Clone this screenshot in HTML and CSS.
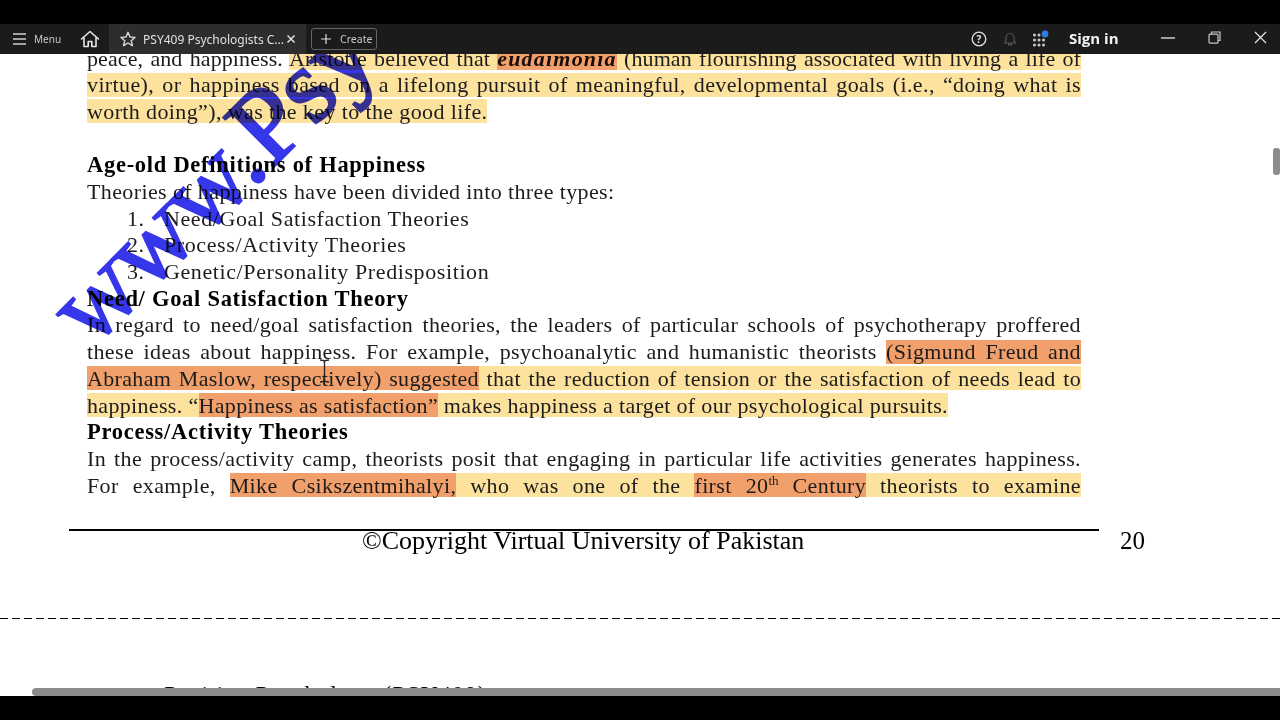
FILE: index.html
```html
<!DOCTYPE html>
<html lang="en">
<head>
<meta charset="utf-8">
<title>PSY409 Psychologists</title>
<link rel="stylesheet" href="styles.css">
</head>
<body>
<div class="letterbox"></div>
<header class="toolbar">
  <button class="menu">
    <svg width="16" height="14" viewBox="0 0 16 14"><path d="M1 2h13M1 7h13M1 12h13" stroke="#d0d0d0" stroke-width="1.4" fill="none"/></svg>
    <span>Menu</span>
  </button>
  <svg class="home" width="20" height="18" viewBox="0 0 20 18"><path d="M1.500 9 10 1.500 18.500 9M4 7.500V16.500h4.200V11.500h3.600v5H16V7.500" stroke="#e6e6e6" stroke-width="1.600" fill="none" stroke-linejoin="round" stroke-linecap="round"/></svg>
  <div class="tab">
    <svg width="16" height="16" viewBox="0 0 16 16"><path d="M8 1.300 10 6l5 .4-3.800 3.300 1.200 5L8 12l-4.400 2.700 1.200-5L1 6.400 6 6z" stroke="#d8d8d8" stroke-width="1.400" fill="none" stroke-linejoin="round"/></svg>
    <span class="tab-title">PSY409 Psychologists C...</span>
    <svg class="tab-x" width="10" height="10" viewBox="0 0 10 10"><path d="M1.500 1.500l7 7M8.500 1.500l-7 7" stroke="#e0e0e0" stroke-width="1.500"/></svg>
  </div>
  <button class="create">
    <svg width="12" height="12" viewBox="0 0 12 12"><path d="M6 1v10M1 6h10" stroke="#e0e0e0" stroke-width="1.200"/></svg>
    <span>Create</span>
  </button>
  <div class="spacer"></div>
  <svg class="tool help" width="16" height="16" viewBox="0 0 16 16"><circle cx="8" cy="8" r="6.800" stroke="#e0e0e0" stroke-width="1.300" fill="none"/><text x="8" y="11.500" class="help-q">?</text></svg>
  <svg class="tool bell" width="16" height="16" viewBox="0 0 16 16"><path d="M2.500 12c1.200-1 1.500-2 1.500-4.500C4 4.500 5.800 2.500 8 2.500s4 2 4 5c0 2.500.3 3.500 1.500 4.500zM6.500 12.500v1.300h3v-1.300" stroke="#555" stroke-width="1.200" fill="none" stroke-linejoin="round"/></svg>
  <svg class="tool apps" width="18" height="18" viewBox="0 0 18 18"><g fill="#c8c8c8"><circle cx="2.500" cy="5" r="1.500"/><circle cx="7" cy="5" r="1.500"/><circle cx="2.500" cy="10" r="1.500"/><circle cx="7" cy="10" r="1.500"/><circle cx="11.500" cy="10" r="1.500"/><circle cx="2.500" cy="15" r="1.500"/><circle cx="7" cy="15" r="1.500"/><circle cx="11.500" cy="15" r="1.500"/></g><circle cx="13" cy="4" r="3.400" fill="#2f7de0"/></svg>
  <span class="signin">Sign in</span>
  <svg class="win min" width="14" height="2" viewBox="0 0 14 2"><path d="M0 1h14" stroke="#e6e6e6" stroke-width="1.300"/></svg>
  <svg class="win restore" width="13" height="13" viewBox="0 0 13 13"><path d="M3.500 3V1h8.500v8.500H10" stroke="#c8c8c8" stroke-width="1.200" fill="none"/><rect x="1" y="3.200" width="9" height="9" rx="1" stroke="#c8c8c8" stroke-width="1.200" fill="none"/></svg>
  <svg class="win close" width="13" height="13" viewBox="0 0 13 13"><path d="M1 1l11 11M12 1 1 12" stroke="#e6e6e6" stroke-width="1.200"/></svg>
</header>
<main class="viewer">
  <article class="page">
    <p class="line just first">peace, and happiness. <span class="y">Aristotle believed that </span><span class="o strong">eudaimonia</span><span class="y"> (human flourishing associated with living a life of</span></p>
    <p class="line just"><span class="y">virtue), or happiness based on a lifelong pursuit of meaningful, developmental goals (i.e., “doing what is</span></p>
    <p class="line"><span class="y">worth doing”), was the key to the good life.</span></p>
    <p class="line blank">&nbsp;</p>
    <h2 class="line head">Age-old Definitions of Happiness</h2>
    <p class="line">Theories of happiness have been divided into three types:</p>
    <ol class="types">
      <li class="line"><span class="num">1.</span><span>Need/Goal Satisfaction Theories</span></li>
      <li class="line"><span class="num">2.</span><span>Process/Activity Theories</span></li>
      <li class="line"><span class="num">3.</span><span>Genetic/Personality Predisposition</span></li>
    </ol>
    <h2 class="line head">Need/ Goal Satisfaction Theory</h2>
    <p class="line just">In regard to need/goal satisfaction theories, the leaders of particular schools of psychotherapy proffered</p>
    <p class="line just">these ideas about happiness. For example, psychoanalytic and humanistic theorists <span class="o">(Sigmund Freud and</span></p>
    <p class="line just tight"><span class="o">Abraham Maslow, respectively) suggested</span><span class="y"> that the reduction of tension or the satisfaction of needs lead to</span></p>
    <p class="line tight"><span class="y">happiness. “</span><span class="o">Happiness as satisfaction”</span><span class="y"> makes happiness a target of our psychological pursuits.</span></p>
    <h2 class="line head">Process/Activity Theories</h2>
    <p class="line just">In the process/activity camp, theorists posit that engaging in particular life activities generates happiness.</p>
    <p class="line just">For example, <span class="o">Mike Csikszentmihalyi,</span><span class="y"> who was one of the </span><span class="o">first 20<sup>th</sup> Century</span><span class="y"> theorists to examine</span></p>
    <footer class="page-foot">
      <span class="copy">©Copyright Virtual University of Pakistan</span>
      <span class="pageno">20</span>
    </footer>
    <div class="page-break"></div>
    <div class="next-head">Positive Psychology (PSY409)</div>
    <div class="watermark">www.Psy</div>
  </article>
  <svg class="cursor" width="11" height="24" viewBox="0 0 11 24"><path d="M1 1c2.500 0 4 .5 4.500 1.500C6 1.500 7.500 1 10 1M5.500 2.500v19M1 23c2.500 0 4-.5 4.500-1.500.5 1 2 1.500 4.500 1.500" stroke="#222" stroke-width="1.300" fill="none"/></svg>
  <div class="vthumb"></div>
  <div class="hthumb"></div>
</main>
<div class="letterbox"></div>
</body>
</html>
```
FILE: styles.css
```css
* { box-sizing: border-box; }
html, body { margin: 0; padding: 0; width: 1280px; height: 720px; overflow: hidden; background: #000; }
body { display: flex; flex-direction: column; font-family: "Noto Sans", sans-serif; }
.letterbox { height: 24px; background: #000; flex: none; }
.toolbar { height: 30px; flex: none; background: #1b1b1b; display: flex; align-items: center; color: #d8d8d8; position: relative; z-index: 5; }
button { background: none; border: 0; color: inherit; font: inherit; padding: 0; display: flex; align-items: center; }
.menu { margin-left: 12px; gap: 6px; font-size: 10px; color: #c8c8c8; }
.home { margin-left: 19px; }
.tab { margin-left: 9px; width: 197px; height: 30px; background: #2d2d2d; display: flex; align-items: center; padding-left: 11px; font-size: 12px; color: #e0e0e0; }
.tab-title { margin-left: 7px; width: 141px; white-space: nowrap; overflow: hidden; }
.tab-x { margin-left: 2px; }
.create { margin-left: 5px; width: 66px; height: 22px; border: 1px solid #666; border-radius: 3px; padding-left: 8px; gap: 8px; font-size: 10.500px; color: #c8c8c8; }
.spacer { flex: 1; }
.tool { flex: none; }
.help { margin-right: 15px; }
.help-q { font: 700 10px "Noto Sans", sans-serif; fill: #e0e0e0; text-anchor: middle; }
.bell { margin-right: 14px; }
.apps { margin-right: 19px; }
.signin { font: 700 15px "Open Sans", sans-serif; color: #f2f2f2; width: 50px; white-space: nowrap; margin-right: 42px; position: relative; top: -1px; }
.win { flex: none; }
.min { margin-right: 33px; position: relative; top: -1px; }
.restore { margin-right: 33px; position: relative; top: -2px; }
.close { margin-right: 13px; position: relative; top: -2px; }
.viewer { flex: 1; min-height: 0; background: #fff; position: relative; overflow: hidden; }
.page { margin-top: -8.400px; padding-left: 87px; width: 1081px; position: relative; font-family: "Liberation Serif", serif; color: #1c1c1c; }
.line { display: block; margin: 0; height: 26.700px; line-height: 26.700px; font-size: 22px; font-weight: 400; white-space: nowrap; letter-spacing: .38px; }
.just { white-space: normal; text-align: justify; text-align-last: justify; }
.first { letter-spacing: .1px; }
.tight { letter-spacing: .33px; }
.head { font-size: 22.500px; font-weight: 700; color: #000; letter-spacing: .72px; }
.y { background: linear-gradient(#fde29e, #fde29e) 0 50% / 100% 24px no-repeat; }
.o { background: linear-gradient(#f2a06b, #f2a06b) 0 50% / 100% 24px no-repeat; }
.strong { font-weight: 700; font-style: italic; color: #1a0c08; letter-spacing: 1.200px; }
sup { font-size: 13px; line-height: 0; letter-spacing: 0; }
.types { list-style: none; margin: 0; padding: 0 0 0 40px; }
.types li { display: flex; letter-spacing: .6px; }
.num { width: 37px; flex: none; }
.watermark { position: absolute; left: 0; top: 0; font: 400 108px "Liberation Serif", serif; line-height: 1; color: #3636ea; -webkit-text-stroke: 2px #3636ea; transform: translate(66px, 224px) rotate(-45deg); transform-origin: left center; white-space: nowrap; mix-blend-mode: multiply; pointer-events: none; }
.page-foot { width: 1030px; margin: 30px 0 0 -18px; border-top: 2px solid #000; display: flex; font-size: 26px; line-height: 20px; height: 89px; position: relative; color: #000; }
.copy { margin-left: 293px; width: 442px; white-space: nowrap; }
.pageno { position: absolute; left: 1051px; top: 0; font-size: 25px; }
.page-break { margin-left: -87px; width: 1280px; height: 1px; background: repeating-linear-gradient(to right, #000 0 8px, transparent 8px 12px); }
.next-head { margin: 63px 0 0 77px; font-size: 24px; line-height: 24px; letter-spacing: .9px; color: #000; white-space: nowrap; }
.cursor { position: absolute; left: 319px; top: 305px; z-index: 3; }
.vthumb { position: absolute; left: 1273px; top: 94px; width: 7px; height: 27px; background: #8c8c8c; border-radius: 3px; z-index: 3; }
.hthumb { position: absolute; left: 32px; bottom: 0; right: 0; height: 8px; background: #8c8c8c; border-radius: 4px 0 0 4px; z-index: 3; }
```
